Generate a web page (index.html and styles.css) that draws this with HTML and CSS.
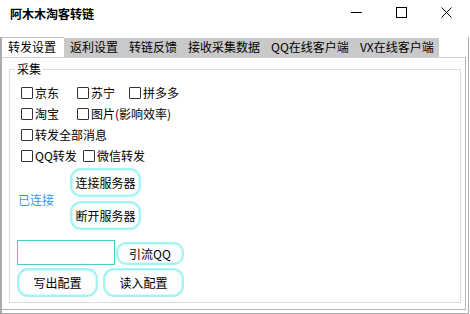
FILE: index.html
```html
<!DOCTYPE html>
<html lang="zh-CN">
<head>
    <meta charset="UTF-8">
    <meta name="viewport" content="width=device-width, initial-scale=1.0">
    <title>阿木木淘客转链</title>
    <link rel="stylesheet" href="styles.css">
</head>
<body>
    <div class="window">
        <div class="titlebar">
            <div class="title">阿木木淘客转链</div>
            <div class="controls">
                <span class="ctl">
                    <svg width="11" height="11" viewBox="0 0 11 11"><path d="M0 5.5H11" stroke="#000" stroke-width="1"/></svg>
                </span>
                <span class="ctl">
                    <svg width="11" height="11" viewBox="0 0 11 11"><rect x="0.5" y="0.5" width="10" height="10" fill="none" stroke="#000" stroke-width="1"/></svg>
                </span>
                <span class="ctl">
                    <svg width="11" height="11" viewBox="0 0 11 11"><path d="M0.5 0.5L10.5 10.5M10.5 0.5L0.5 10.5" stroke="#000" stroke-width="1"/></svg>
                </span>
            </div>
        </div>

        <div class="main">
            <div class="tabs">
                <div class="tab active">转发设置</div>
                <div class="tab">返利设置</div>
                <div class="tab">转链反馈</div>
                <div class="tab">接收采集数据</div>
                <div class="tab">QQ在线客户端</div>
                <div class="tab">VX在线客户端</div>
            </div>

            <div class="panel">
                <fieldset class="group">
                    <legend>采集</legend>
                    <div class="content">
                        <div class="checks">
                            <div class="row">
                                <label class="check w56"><span class="box"></span>京东</label>
                                <label class="check w52"><span class="box"></span>苏宁</label>
                                <label class="check"><span class="box"></span>拼多多</label>
                            </div>
                            <div class="row">
                                <label class="check w56"><span class="box"></span>淘宝</label>
                                <label class="check"><span class="box"></span>图片(影响效率)</label>
                            </div>
                            <div class="row">
                                <label class="check"><span class="box"></span>转发全部消息</label>
                            </div>
                            <div class="row">
                                <label class="check w62"><span class="box"></span>QQ转发</label>
                                <label class="check"><span class="box"></span>微信转发</label>
                            </div>
                        </div>

                        <div class="connect">
                            <div class="status">已连接</div>
                            <div class="server-btns">
                                <button class="btn server">连接服务器</button>
                                <button class="btn server">断开服务器</button>
                            </div>
                        </div>

                        <div class="qq-row">
                            <input class="qq-input" type="text">
                            <button class="btn small">引流QQ</button>
                        </div>

                        <div class="config-row">
                            <button class="btn config">写出配置</button>
                            <button class="btn config">读入配置</button>
                        </div>
                    </div>
                </fieldset>
            </div>
        </div>
    </div>
</body>
</html>
```

FILE: styles.css
```css
body {
    margin: 0;
    background-color: #fff;
    font-family: "Noto Sans CJK SC", "Noto Sans", sans-serif;
    font-size: 12px;
    color: #000;
}
.window {
    width: 470px;
    height: 314px;
    display: flex;
    flex-direction: column;
    overflow: hidden;
}
.titlebar {
    height: 37px;
    display: flex;
    justify-content: space-between;
    align-items: flex-start;
}
.title {
    font-weight: bold;
    padding: 6px 0 0 10px;
    line-height: 16px;
}
.controls {
    display: flex;
    margin-right: 1px;
}
.ctl {
    width: 45px;
    height: 25px;
    display: flex;
    align-items: center;
    justify-content: center;
}
.main {
    flex: 1;
    display: flex;
    flex-direction: column;
    margin-right: 1px;
    border-left: 2px solid #ababab;
    border-right: 1px solid #ababab;
    border-bottom: 1px solid #ababab;
}
.tabs {
    height: 20px;
    display: flex;
    align-items: flex-end;
}
.tab {
    height: 19px;
    line-height: 18px;
    padding: 0 5px 0 6px;
    background-color: #c9c9c9;
    white-space: nowrap;
}
.tab.active {
    height: 19px;
    line-height: 18px;
    padding: 0 8px 0 6px;
    background-color: #fff;
    border-top: 1px solid #c0c0c0;
}
.panel {
    flex: 1;
    display: flex;
    flex-direction: column;
    margin: 0 2px 3px 0;
    border-top: 1px solid #d0d0d0;
    border-right: 1px solid #b4b4b4;
    border-bottom: 1px solid #b4b4b4;
}
.group {
    flex: 1;
    margin: 4px 4px 6px 7px;
    padding: 0;
    min-width: 0;
    border: 1px solid #dcdcdc;
}
.group legend {
    margin-left: 5px;
    padding: 0 2px;
    line-height: 14px;
}
.content {
    padding: 6px 0 0 7px;
}
.checks {
    margin-left: 4px;
}
.row {
    height: 21px;
    display: flex;
    align-items: center;
}
.check {
    display: flex;
    align-items: center;
    gap: 2px;
    line-height: 14px;
    white-space: nowrap;
}
.w56 { width: 56px; }
.w52 { width: 52px; }
.w62 { width: 62px; }
.box {
    width: 12px;
    height: 12px;
    box-sizing: border-box;
    border: 1px solid #333;
    border-radius: 1px;
    background-color: #fff;
}
.connect {
    display: flex;
    align-items: center;
    margin-top: 2px;
}
.status {
    width: 52px;
    margin-left: 1px;
    color: #3a95ee;
}
.server-btns {
    display: flex;
    flex-direction: column;
    gap: 4px;
}
.btn {
    box-sizing: border-box;
    background-color: #fdfdfd;
    border: 2px solid #a3f3f3;
    border-radius: 11px;
    box-shadow: inset 0 0 0 1px #d8fbfb;
    font-family: inherit;
    font-size: 12px;
    color: #000;
    padding: 0;
}
.server {
    width: 71px;
    height: 29px;
}
.qq-row {
    display: flex;
    align-items: flex-end;
    margin-top: 10px;
}
.qq-input {
    width: 98px;
    height: 25px;
    box-sizing: border-box;
    border: 1px solid #4ccdc1;
    margin: 0;
    padding: 0 3px;
}
.small {
    width: 68px;
    height: 23px;
    margin-left: 1px;
    border-radius: 10px;
}
.config-row {
    display: flex;
    gap: 5px;
    margin-top: 3px;
}
.config {
    width: 81px;
    height: 29px;
}
```
